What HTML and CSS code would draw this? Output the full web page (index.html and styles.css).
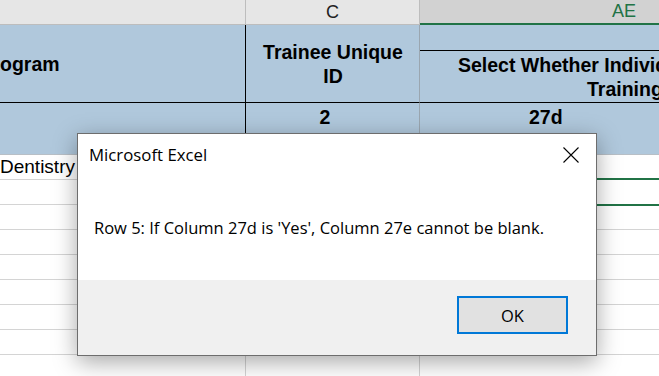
FILE: index.html
```html
<!DOCTYPE html>
<html>
<head>
<meta charset="utf-8">
<link rel="stylesheet" href="styles.css">
</head>
<body>
<div class="sheet">
  <div class="colhdr bl"></div>
  <div class="colhdr c">C</div>
  <div class="colhdr sel">AE</div>

  <div class="hcell hb prog">ogram</div>
  <div class="hcell hb hc"><span>Trainee Unique<br>ID</span></div>
  <div class="hcell hae">
    <div class="hae-top"></div>
    <div class="hae-bot"><div class="l1">Select Whether Individual</div><div class="l2">Training</div></div>
  </div>

  <div class="hcell2 hb"></div>
  <div class="hcell2 hb num2">2</div>
  <div class="hcell2 num27">27d</div>

  <div class="cell ca">Dentistry</div><div class="cell cc"></div><div class="cell"></div>
  <div class="cell ca"></div><div class="cell cc"></div><div class="cell selcell"></div>
  <div class="cell ca"></div><div class="cell cc"></div><div class="cell"></div>
  <div class="cell ca"></div><div class="cell cc"></div><div class="cell"></div>
  <div class="cell ca"></div><div class="cell cc"></div><div class="cell"></div>
  <div class="cell ca"></div><div class="cell cc"></div><div class="cell"></div>
  <div class="cell ca"></div><div class="cell cc"></div><div class="cell"></div>
  <div class="cell ca"></div><div class="cell cc"></div><div class="cell"></div>
  <div class="cell ca"></div><div class="cell cc"></div><div class="cell"></div>
</div>

<div class="dialog">
  <div class="dlg-body">
    <div class="dlg-head">
      <span class="dlg-title">Microsoft Excel</span>
      <svg class="dlg-close" width="16" height="16" viewBox="0 0 16 16"><path d="M0.5 0.5 L15.5 15.5 M15.5 0.5 L0.5 15.5" stroke="#000" stroke-width="1.1" fill="none"/></svg>
    </div>
    <div class="dlg-msg">Row 5: If Column 27d is 'Yes', Column 27e cannot be blank.</div>
  </div>
  <div class="dlg-foot">
    <button class="ok">OK</button>
  </div>
</div>
</body>
</html>
```
FILE: styles.css
```css
html, body {
  margin: 0;
  padding: 0;
  width: 659px;
  height: 376px;
  overflow: hidden;
  background: #fff;
}
body {
  position: relative;
  font-family: "Liberation Sans", Arial, sans-serif;
}
.sheet {
  display: grid;
  grid-template-columns: 246px 174px 408px;
  grid-template-rows: 25px 78px 52px repeat(9, 25px);
  width: 828px;
}
.sheet > div {
  box-sizing: border-box;
  white-space: nowrap;
  overflow: hidden;
}
.colhdr {
  background: #e6e6e6;
  border-bottom: 1px solid #bdbdbd;
  border-right: 1px solid #bdbdbd;
  font-size: 18px;
  line-height: 24px;
  text-align: center;
  color: #222;
}
.colhdr.sel {
  background: #d2d2d2;
  color: #217346;
  border-bottom: 2px solid #217346;
  border-right: none;
  line-height: 23px;
}
.hcell, .hcell2 {
  background: #b0c8dc;
  font-weight: bold;
  font-size: 19.5px;
  line-height: 24px;
  color: #000;
  border-bottom: 1px solid #000;
  border-right: 1px solid #9aa6b0;
}
.hcell2 {
  border-bottom: 1px solid #b8bfc6;
  padding-top: 2px;
}
.hb { border-right: 1px solid #000; }
.sheet > .hcell2:nth-child(7) { border-right: 1px solid #000; }
.sheet > .hcell2.num2 { border-right: 1px solid #9aa6b0; }
.sheet > .hcell.hc { border-right: 1px solid #9aa6b0; }
.sheet > .hcell.prog { border-right: 1px solid #000; }
.prog {
  display: flex;
  align-items: center;
}
.hc {
  display: flex;
  align-items: center;
  justify-content: center;
  text-align: center;
  padding-left: 1px;
}
.hae {
  display: flex;
  flex-direction: column;
  border-right: none !important;
}
.hae-top {
  height: 26px;
  flex: none;
  box-sizing: border-box;
  border-bottom: 1px solid #000;
}
.hae-bot {
  flex: 1;
  display: flex;
  flex-direction: column;
  justify-content: center;
}
.hae-bot .l1 { padding-left: 38px; }
.hae-bot .l2 { padding-left: 167px; }
.num2 {
  text-align: center;
  padding-right: 15px;
}
.num27 {
  padding-left: 109px;
  border-right: none !important;
}
.cell {
  border-bottom: 1px solid #d4d4d4;
  font-size: 19px;
  line-height: 24px;
  color: #000;
}
.cell.ca, .cell.cc { border-right: 1px solid #d4d4d4; }
.sheet > .selcell { overflow: visible; position: relative; }
.selcell::after {
  content: "";
  position: absolute;
  left: -1px;
  right: 0;
  top: -2px;
  bottom: -2px;
  border: 2px solid #217346;
  border-right: none;
}

.dialog {
  position: absolute;
  left: 77px;
  top: 133px;
  width: 520px;
  height: 223px;
  box-sizing: border-box;
  border: 1px solid #6d6d6d;
  background: #fff;
  box-shadow: 0 6px 22px rgba(0,0,0,0.35);
  display: flex;
  flex-direction: column;
  font-family: "Open Sans", "Noto Sans", sans-serif;
  color: #000;
}
.dlg-body {
  height: 146px;
  flex: none;
  box-sizing: border-box;
  padding: 0 17px 0 11px;
}
.dlg-head {
  display: flex;
  justify-content: space-between;
  align-items: flex-start;
  height: 62px;
}
.dlg-title {
  font-size: 16.8px;
  line-height: 22px;
  margin-top: 10px;
}
.dlg-close {
  margin-top: 13px;
}
.dlg-msg {
  font-size: 16.5px;
  line-height: 22px;
  padding-left: 5px;
  padding-top: 21px;
}
.dlg-foot {
  flex: 1;
  background: #f0f0f0;
  display: flex;
  justify-content: flex-end;
  align-items: flex-start;
  padding: 16px 28px 0 0;
}
.ok {
  width: 111px;
  height: 38px;
  box-sizing: border-box;
  border: 2px solid #0078d7;
  background: #e1e1e1;
  font-family: "Open Sans", "Noto Sans", sans-serif;
  font-size: 16.5px;
  color: #000;
  padding: 0;
}
```
